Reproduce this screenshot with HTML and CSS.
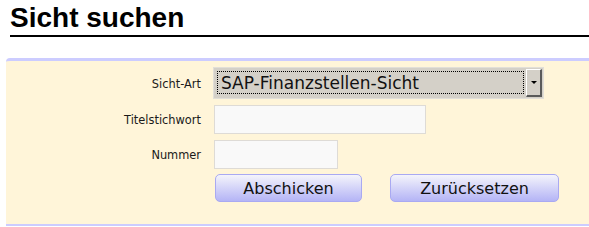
FILE: index.html
```html
<!DOCTYPE html>
<html lang="de">
<head>
  <meta charset="UTF-8" />
  <title>Sicht suchen</title>
  <link rel="stylesheet" href="styles.css">
</head>
<body>
  <h1>Sicht suchen</h1>

  <form class="search-panel" onsubmit="return false;">
    <label class="field-label" for="sichtArt">Sicht-Art</label>
    <div class="combo">
      <select id="sichtArt" class="combo-select">
        <option>SAP-Finanzstellen-Sicht</option>
        <option>Organisations-Sicht</option>
      </select>
      <span class="combo-btn"><span class="combo-arrow"></span></span>
    </div>

    <label class="field-label" for="titel">Titelstichwort</label>
    <div><input type="text" id="titel" class="text-input wide"></div>

    <label class="field-label" for="nummer">Nummer</label>
    <div><input type="text" id="nummer" class="text-input short"></div>

    <div class="button-group">
      <button type="submit" class="btn btn-submit">Abschicken</button>
      <button type="reset" class="btn btn-reset">Zurücksetzen</button>
    </div>
  </form>
</body>
</html>
```

FILE: styles.css
```css
body {
  margin: 0 0 0 6px;
  font-family: "DejaVu Sans", Verdana, sans-serif;
  background: #fff;
}

h1 {
  margin: 2px 0 21px 4px;
  padding-bottom: 1px;
  font-family: "Liberation Sans", Arial, sans-serif;
  font-size: 28px;
  font-weight: bold;
  line-height: 32px;
  color: #000;
  border-bottom: 2px solid #000;
}

.search-panel {
  display: grid;
  grid-template-columns: 195px 1fr;
  column-gap: 12px;
  row-gap: 6px;
  align-items: center;
  padding: 6px 0 22px 0;
  background-color: #fff5d9;
  border-top: 3px solid #ccccff;
  border-bottom: 2px solid #ccccff;
  border-top-left-radius: 4px;
}

.field-label {
  padding-top: 1px;
  text-align: right;
  font-size: 11.4px;
  color: #1a1a1a;
}

.combo {
  display: flex;
  align-items: stretch;
  width: 331px;
  height: 32px;
  box-sizing: border-box;
  padding: 1px;
  background-color: #d4d0c8;
  border: 1px solid #e2dfd8;
}

.combo-select {
  flex: 1;
  margin: 2px 2px 3px 2px;
  padding: 0 0 0 3px;
  -webkit-appearance: none;
  appearance: none;
  background: transparent;
  border: 1px dotted #000;
  border-radius: 0;
  font-family: "DejaVu Sans", Verdana, sans-serif;
  font-size: 17px;
  color: #111;
  outline: none;
}

.combo-btn {
  display: flex;
  align-items: center;
  justify-content: center;
  width: 16px;
  box-sizing: border-box;
  background-color: #d4d0c8;
  border-top: 1px solid #fff;
  border-left: 1px solid #fff;
  border-right: 2px solid #5a5a5a;
  border-bottom: 2px solid #5a5a5a;
}

.combo-arrow {
  width: 0;
  height: 0;
  border-left: 3px solid transparent;
  border-right: 3px solid transparent;
  border-top: 3px solid #000;
}

.text-input {
  display: block;
  margin-left: 1px;
  height: 29px;
  box-sizing: border-box;
  background-color: #f9f9f9;
  border: 1px solid #dedbd6;
  font-size: 14px;
}

.wide {
  width: 212px;
}

.short {
  width: 124px;
}

.button-group {
  grid-column: 2;
  display: flex;
  gap: 28px;
  margin-top: -1px;
  padding-left: 2px;
}

.btn {
  height: 28px;
  box-sizing: border-box;
  padding: 0;
  font-family: "DejaVu Sans", Verdana, sans-serif;
  font-size: 16px;
  color: #111;
  background: linear-gradient(to bottom, #f4f4fb, #b4b4f6);
  border: 1px solid #a9a9f2;
  border-radius: 5px;
  cursor: pointer;
}

.btn-submit {
  width: 147px;
}

.btn-reset {
  width: 169px;
}
```
